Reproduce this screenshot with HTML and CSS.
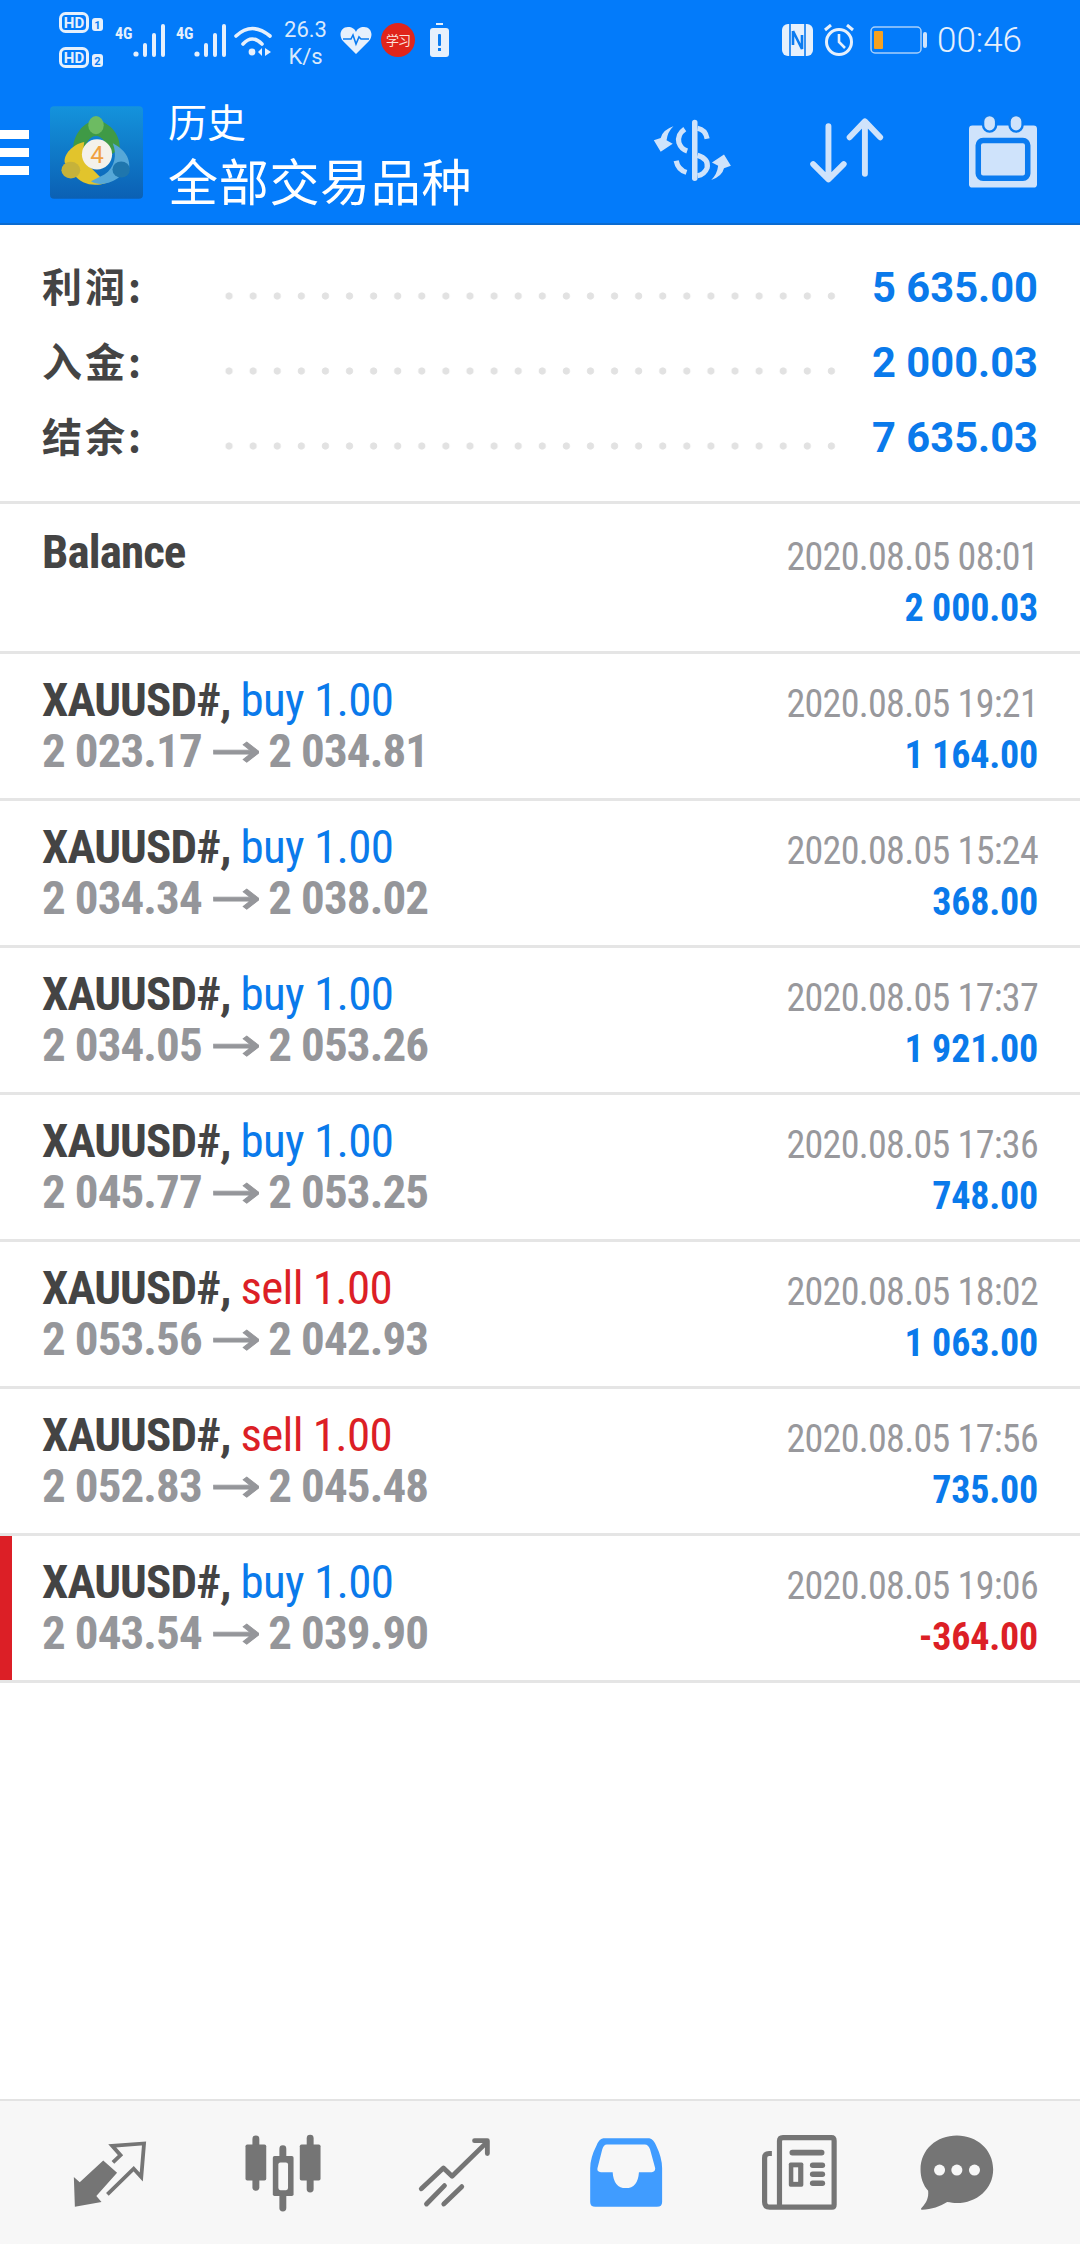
FILE: index.html
```html
<!DOCTYPE html>
<html lang="en">
<head>
  <meta charset="UTF-8">
  <title>History</title>
  <link rel="stylesheet" href="styles.css">
</head>
<body>

  <header class="top">
    <div class="status">
      <svg class="ic-hd" viewBox="0 0 44 56" width="44" height="56">
        <rect x="1.5" y="1.5" width="27" height="18" rx="5" class="hd-box"/>
        <text x="15" y="16" class="hd-text">HD</text>
        <rect x="33" y="6" width="11" height="13" rx="3" fill="#e6f0fc"/>
        <text x="38.5" y="17" class="hd-num">1</text>
        <rect x="1.5" y="36.5" width="27" height="18" rx="5" class="hd-box"/>
        <text x="15" y="51" class="hd-text">HD</text>
        <rect x="33" y="42" width="11" height="13" rx="3" fill="#e6f0fc"/>
        <text x="38.5" y="53" class="hd-num">2</text>
      </svg>
      <svg class="ic-sig" viewBox="0 0 50 34" width="50" height="34">
        <text x="0" y="16" class="g4">4G</text>
        <circle cx="21" cy="31" r="2.6" fill="#e6f0fc"/>
        <rect x="28" y="20" width="4" height="14" rx="2" fill="#e6f0fc"/>
        <rect x="37" y="10" width="4" height="24" rx="2" fill="#e6f0fc"/>
        <rect x="46" y="1" width="4" height="33" rx="2" fill="#e6f0fc"/>
      </svg>
      <svg class="ic-sig2" viewBox="0 0 50 34" width="50" height="34">
        <text x="0" y="16" class="g4">4G</text>
        <circle cx="21" cy="31" r="2.6" fill="#e6f0fc"/>
        <rect x="28" y="20" width="4" height="14" rx="2" fill="#e6f0fc"/>
        <rect x="37" y="10" width="4" height="24" rx="2" fill="#e6f0fc"/>
        <rect x="46" y="1" width="4" height="33" rx="2" fill="#e6f0fc"/>
      </svg>
      <svg class="ic-wifi" viewBox="0 0 38 32" width="38" height="32">
        <path d="M2 12 Q18 -3 36 12" fill="none" stroke="#e6f0fc" stroke-width="3.6" stroke-linecap="round"/>
        <path d="M9 20 Q18 10 28 20" fill="none" stroke="#e6f0fc" stroke-width="3.6" stroke-linecap="round"/>
        <circle cx="18" cy="28" r="3.4" fill="#e6f0fc"/>
        <path d="M28 24 V32 L24 28Z M31 24 V32 L37 28Z" fill="#e6f0fc"/>
      </svg>
      <div class="speed"><span>26.3</span><span>K/s</span></div>
      <svg class="ic-heart" viewBox="0 0 32 28" width="32" height="28">
        <path d="M16 28 L3 15 C-2 9 1 1 8 1 C12 1 15 3 16 6 C17 3 20 1 24 1 C31 1 34 9 29 15Z" fill="#e6f0fc"/>
        <path d="M3 13 H11 L13 9 L16 18 L19 11 L21 13 H29" fill="none" stroke="#0a7bf0" stroke-width="1.6"/>
      </svg>
      <div class="xuexi">学习</div>
      <svg class="ic-batt" viewBox="0 0 19 34" width="19" height="34">
        <rect x="6" y="0" width="7" height="2" fill="#e6f0fc"/>
        <rect x="0" y="5" width="19" height="29" rx="3" fill="#e6f0fc"/>
        <rect x="8" y="11" width="3" height="12" rx="1" fill="#0a7bf0"/>
        <rect x="8" y="25" width="3" height="3" fill="#0a7bf0"/>
      </svg>

      <svg class="ic-nfc" viewBox="0 0 31 32" width="31" height="32">
        <rect width="31" height="32" rx="6" fill="#e6f0fc"/>
        <path d="M8 0 V32 M23 0 V32" stroke="#0a7bf0" stroke-width="1.6"/>
        <path d="M11 7 L20 25 V11 M11 7 V21" fill="none" stroke="#0a7bf0" stroke-width="2.6"/>
      </svg>
      <svg class="ic-alarm" viewBox="0 0 30 32" width="30" height="32">
        <circle cx="15" cy="18" r="12.5" fill="none" stroke="#e6f0fc" stroke-width="3"/>
        <path d="M15 10 V18 L21 24" fill="none" stroke="#e6f0fc" stroke-width="2.6"/>
        <path d="M1 6 L7 1 M29 6 L23 1" stroke="#e6f0fc" stroke-width="3"/>
      </svg>
      <svg class="ic-level" viewBox="0 0 57 28" width="57" height="28">
        <rect x="1" y="1" width="50" height="26" rx="4" fill="none" stroke="#a9d0fa" stroke-width="1.5"/>
        <rect x="4" y="5" width="9" height="18" rx="1" fill="#f7a11f"/>
        <rect x="53" y="6" width="4" height="16" rx="2" fill="#cfe3fb"/>
      </svg>
      <div class="clock">00:46</div>
    </div>

    <div class="bar">
      <div class="burger"><i></i><i></i><i></i></div>
      <svg class="logo" viewBox="28 22 277 275" width="93" height="93">
        <defs>
          <linearGradient id="logoBg" x1="0" y1="0" x2="0" y2="1">
            <stop offset="0" stop-color="#1493dc"/>
            <stop offset="1" stop-color="#0b60b4"/>
          </linearGradient>
        </defs>
        <rect x="28" y="22" width="277" height="275" rx="12" fill="url(#logoBg)"/>
        <path d="M165 62 C118 72 92 120 98 160 L130 170 C130 130 148 110 165 110 C182 110 200 130 202 170 L236 150 C238 110 212 72 165 62Z" fill="#3f9a46"/>
        <ellipse cx="165" cy="78" rx="23" ry="27" fill="#6dbb62"/>
        <path d="M130 128 C95 135 68 165 72 190 L100 225 C120 255 160 262 195 250 L150 205 C125 190 125 160 130 128Z" fill="#e2c42c"/>
        <ellipse cx="90" cy="212" rx="28" ry="25" fill="#c6b23a"/>
        <path d="M215 132 C250 150 272 180 262 215 L235 232 C215 250 175 262 150 245 L190 225 C222 205 228 165 215 132Z" fill="#56a8d8"/>
        <ellipse cx="240" cy="210" rx="26" ry="24" fill="#1f76ad"/>
        <circle cx="168" cy="165" r="45" fill="#f4f1ea"/>
        <text x="168" y="191" class="logo-four">4</text>
      </svg>
      <div class="titles">
        <div class="sub">历史</div>
        <div class="main-title">全部交易品种</div>
      </div>
      <svg class="act-dollar" viewBox="320 360 232 186" width="80" height="64">
        <rect x="436" y="365" width="16" height="178" rx="8" fill="#cfe3fb"/>
        <g fill="none" stroke="#cfe3fb" stroke-width="15">
          <path d="M415 392 Q392 408 398 432 Q404 450 422 456"/>
          <path d="M452 390 Q475 394 480 420"/>
          <path d="M390 484 Q395 510 420 518"/>
          <path d="M452 468 Q485 478 480 505 Q472 525 452 528"/>
        </g>
        <path d="M382 384 Q350 395 345 418 L325 425 L345 458 L380 435 L362 425 Q365 400 382 384Z" fill="#cfe3fb"/>
        <path d="M492 540 Q524 529 529 506 L549 499 L529 466 L494 489 L512 499 Q509 524 492 540Z" fill="#cfe3fb"/>
      </svg>
      <svg class="act-sort" viewBox="780 362 216 192" width="75" height="67">
        <g fill="none" stroke="#cfe3fb" stroke-width="17" stroke-linecap="round" stroke-linejoin="round">
          <path d="M836 388 V540 M792 497 L836 541 L880 497"/>
          <path d="M941 376 V525 M897 420 L941 374 L985 420"/>
        </g>
      </svg>
      <svg class="act-cal" viewBox="1243 350 198 212" width="68" height="73">
        <rect x="1243" y="380" width="198" height="181" rx="10" fill="#cfe3fb"/>
        <rect x="1284" y="350" width="38" height="48" rx="19" fill="#cfe3fb" stroke="#0a7bf0" stroke-width="7"/>
        <rect x="1361" y="350" width="38" height="48" rx="19" fill="#cfe3fb" stroke="#0a7bf0" stroke-width="7"/>
        <rect x="1270" y="424" width="144" height="110" rx="14" fill="#cfe3fb" stroke="#0a7bf0" stroke-width="16"/>
      </svg>
    </div>
  </header>

  <section class="summary">
    <div class="sum-row"><span class="sum-label">利润:</span><span class="dots"></span><span class="sum-val">5 635.00</span></div>
    <div class="sum-row"><span class="sum-label">入金:</span><span class="dots"></span><span class="sum-val">2 000.03</span></div>
    <div class="sum-row"><span class="sum-label">结余:</span><span class="dots"></span><span class="sum-val">7 635.03</span></div>
  </section>

  <main class="list">
    <div class="row first">
      <div class="left"><div class="l1"><b>Balance</b></div></div>
      <div class="right"><div class="date">2020.08.05 08:01</div><div class="val">2 000.03</div></div>
    </div>
    <div class="row">
      <div class="left"><div class="l1"><b>XAUUSD#,</b> <span class="buy">buy 1.00</span></div><div class="l2">2 023.17<span class="arr">→</span>2 034.81</div></div>
      <div class="right"><div class="date">2020.08.05 19:21</div><div class="val">1 164.00</div></div>
    </div>
    <div class="row">
      <div class="left"><div class="l1"><b>XAUUSD#,</b> <span class="buy">buy 1.00</span></div><div class="l2">2 034.34<span class="arr">→</span>2 038.02</div></div>
      <div class="right"><div class="date">2020.08.05 15:24</div><div class="val">368.00</div></div>
    </div>
    <div class="row">
      <div class="left"><div class="l1"><b>XAUUSD#,</b> <span class="buy">buy 1.00</span></div><div class="l2">2 034.05<span class="arr">→</span>2 053.26</div></div>
      <div class="right"><div class="date">2020.08.05 17:37</div><div class="val">1 921.00</div></div>
    </div>
    <div class="row">
      <div class="left"><div class="l1"><b>XAUUSD#,</b> <span class="buy">buy 1.00</span></div><div class="l2">2 045.77<span class="arr">→</span>2 053.25</div></div>
      <div class="right"><div class="date">2020.08.05 17:36</div><div class="val">748.00</div></div>
    </div>
    <div class="row">
      <div class="left"><div class="l1"><b>XAUUSD#,</b> <span class="sell">sell 1.00</span></div><div class="l2">2 053.56<span class="arr">→</span>2 042.93</div></div>
      <div class="right"><div class="date">2020.08.05 18:02</div><div class="val">1 063.00</div></div>
    </div>
    <div class="row">
      <div class="left"><div class="l1"><b>XAUUSD#,</b> <span class="sell">sell 1.00</span></div><div class="l2">2 052.83<span class="arr">→</span>2 045.48</div></div>
      <div class="right"><div class="date">2020.08.05 17:56</div><div class="val">735.00</div></div>
    </div>
    <div class="row loss">
      <div class="left"><div class="l1"><b>XAUUSD#,</b> <span class="buy">buy 1.00</span></div><div class="l2">2 043.54<span class="arr">→</span>2 039.90</div></div>
      <div class="right"><div class="date">2020.08.05 19:06</div><div class="val neg">-364.00</div></div>
    </div>
  </main>

  <nav class="tabs">
    <svg class="tab" viewBox="201 147 240 240">
      <path d="M215 280 L232 295 L300 232 L340 268 L280 335 L295 352 L218 366Z" fill="#757575"/>
      <path d="M328 238 L350 217 L326 190 L418 183 L410 280 L388 256 L312 330" fill="none" stroke="#757575" stroke-width="11"/>
    </svg>
    <svg class="tab" viewBox="696 147 240 240">
      <g fill="#757575">
        <rect x="729" y="160" width="20" height="160" rx="10"/>
        <rect x="709" y="186" width="60" height="104" rx="5"/>
        <rect x="807" y="188" width="20" height="192" rx="10"/>
        <rect x="788" y="219" width="60" height="116" rx="5"/>
        <rect x="886" y="158" width="20" height="167" rx="10"/>
        <rect x="866" y="186" width="60" height="104" rx="5"/>
      </g>
      <rect x="804" y="238" width="28" height="80" rx="6" fill="#f7f7f7"/>
    </svg>
    <svg class="tab" viewBox="1197 147 240 240">
      <g fill="none" stroke="#757575" stroke-width="14" stroke-linecap="round" stroke-linejoin="round">
        <path d="M1221 314 L1285 254 L1310 278 L1405 185"/>
        <path d="M1375 175 H1412 V212"/>
        <path d="M1236 358 L1288 305 M1286 358 L1338 308"/>
      </g>
    </svg>
    <svg class="tab" viewBox="132 147 240 240">
      <path d="M185 168 H318 Q330 170 338 190 Q355 225 355 255 V352 Q355 366 340 366 H162 Q147 366 147 352 V255 Q147 225 165 190 Q172 170 185 168Z" fill="#409cff"/>
      <path d="M195 186 H305 Q315 186 320 200 L335 255 Q335 266 325 266 H288 Q285 312 250 312 Q215 312 212 266 H178 Q166 266 168 255 L182 200 Q186 186 195 186Z" fill="#f7f7f7"/>
    </svg>
    <svg class="tab" viewBox="633 147 240 240">
      <path d="M676 212 H668 Q655 212 655 225 V352 Q655 367 670 367 H850 Q856 367 856 360 V175 Q856 166 848 166 H708 Q698 166 698 176 V367" fill="none" stroke="#757575" stroke-width="15"/>
      <g fill="#757575">
        <rect x="727" y="201" width="101" height="17" rx="8"/>
        <rect x="725" y="238" width="42" height="70" rx="5"/>
        <rect x="786" y="238" width="44" height="16" rx="8"/>
        <rect x="786" y="264" width="44" height="16" rx="8"/>
        <rect x="786" y="290" width="44" height="16" rx="8"/>
      </g>
      <rect x="738" y="252" width="14" height="42" fill="#f7f7f7"/>
    </svg>
    <svg class="tab tab-chat" viewBox="1092 147 240 240">
      <path d="M1213 160 C1270 160 1318 200 1318 258 C1318 315 1270 355 1213 355 C1205 355 1195 353 1185 352 C1165 365 1140 373 1112 375 C1108 374 1109 371 1112 368 C1125 355 1132 340 1130 320 C1115 302 1108 282 1108 258 C1108 200 1155 160 1213 160Z" fill="#757575"/>
      <g fill="#f7f7f7">
        <circle cx="1163" cy="260" r="16"/>
        <circle cx="1213" cy="260" r="16"/>
        <circle cx="1264" cy="260" r="16"/>
      </g>
    </svg>
  </nav>

</body>
</html>
```

FILE: styles.css
```css
html, body { margin: 0; padding: 0; }
body { width: 1080px; height: 2244px; overflow: hidden; display: flex; flex-direction: column; background: #fff; font-family: Roboto, "Noto Sans CJK SC", sans-serif; }

.top { background: #037bfa; border-bottom: 2px solid #0b6bd0; height: 223px; color: #fff; }
.status { display: flex; align-items: center; height: 80px; padding-left: 59px; padding-right: 58px; box-sizing: border-box; }
.ic-sig { margin-left: 12px; }
.ic-sig2 { margin-left: 11px; }
.ic-wifi { margin-left: 8px; }
.speed { margin-left: 12px; margin-top: 6px; width: 43px; display: flex; flex-direction: column; align-items: center; font-size: 22px; line-height: 27px; color: #d9e9fc; }
.ic-heart { margin-left: 13px; }
.xuexi { margin-left: 9px; width: 34px; height: 34px; border-radius: 50%; background: #e0251b; color: #fbe3dc; font-size: 13px; line-height: 34px; text-align: center; font-family: "Noto Sans CJK SC", sans-serif; letter-spacing: -1px; }
.ic-batt { margin-left: 15px; }
.ic-nfc { margin-left: auto; }
.ic-alarm { margin-left: 11px; }
.ic-level { margin-left: 16px; }
.clock { margin-left: 10px; font-size: 35px; font-weight: 300; color: #e6f0fc; }
.hd-box { fill: none; stroke: #e6f0fc; stroke-width: 3; }
.hd-text { font: bold 15px Roboto, sans-serif; fill: #e6f0fc; text-anchor: middle; }
.hd-num { font: bold 11px Roboto, sans-serif; fill: #0a7bf0; text-anchor: middle; }
.g4 { font: bold 16px Roboto, sans-serif; font-stretch: condensed; fill: #e6f0fc; }
.logo-four { font: 72px Roboto, sans-serif; fill: #f0a040; text-anchor: middle; }

.bar { display: flex; align-items: center; height: 143px; }
.burger { display: flex; flex-direction: column; gap: 9px; width: 29px; margin-top: 2px; }
.burger i { display: block; height: 9px; background: #fff; }
.logo { margin-left: 21px; margin-top: 2px; }
.titles { margin-left: 25px; font-family: "Noto Sans CJK SC", sans-serif; margin-top: 5px; }
.sub { font-size: 39px; line-height: 50px; }
.main-title { font-size: 50px; line-height: 68px; letter-spacing: 0.7px; }
.act-dollar { margin-left: auto; margin-top: -4px; }
.act-sort { margin-left: 77px; margin-top: -2px; }
.act-cal { margin-left: 85px; margin-right: 43px; margin-top: -1px; }

.summary { padding: 25px 42px 25.5px 42px; border-bottom: 3px solid #e5e5e5; }
.sum-row { display: flex; align-items: center; height: 75px; }
.sum-label { width: 176px; margin-bottom: 5px; font-family: "Noto Sans CJK SC", sans-serif; font-size: 40px; font-weight: 700; color: #444; letter-spacing: 3px; }
.dots { flex: 1; height: 8px; margin-top: 16px; background: radial-gradient(circle, #e2e2e2 3.2px, transparent 4px) -1px 0 / 24.1px 8px repeat-x; }
.sum-val { width: 200px; text-align: right; font-size: 41.7px; font-weight: 700; color: #0a7aeb; }

.list { flex: 1; }
.row { display: flex; justify-content: space-between; height: 144px; border-bottom: 3px solid #e5e5e5; padding: 0 42px; font-family: "Roboto Condensed", Roboto, sans-serif; font-stretch: condensed; }
.row.first { padding-top: 3px; }
.row.first .left { padding-top: 19px; }
.row.loss { box-shadow: inset 12px 0 0 #dc1f26; }
.left { padding-top: 20px; }
.l1 { font-size: 47px; line-height: 51px; letter-spacing: -0.9px; color: #0a7aeb; }
.l1 b { color: #444; }
.l2 { font-size: 47px; line-height: 51px; letter-spacing: -0.9px; font-weight: 700; color: #95969a; }
.arr { display: inline-block; font-family: "DejaVu Sans", sans-serif; font-size: 47px; line-height: 40px; font-weight: 400; font-stretch: normal; margin: 0 14px; transform: scaleX(1.3); -webkit-text-stroke: 0.8px #95969a; }
.buy { color: #0a7aeb; letter-spacing: -0.7px; }
.sell { color: #dc1f26; letter-spacing: -0.7px; }
.right { padding-top: 22px; text-align: right; }
.date { font-size: 38px; line-height: 51px; padding-top: 3px; letter-spacing: -0.7px; color: #98989c; }
.val { font-size: 38px; line-height: 51px; letter-spacing: -0.2px; font-weight: 700; color: #0a7aeb; }
.val.neg { color: #dc1f26; }

.tabs { display: flex; flex: none; height: 145px; box-sizing: border-box; padding: 30px 0 0 69px; background: #f7f7f7; border-top: 2px solid #e3e3e3; }
.tab { width: 83px; height: 83px; margin-left: 89px; }
.tab:first-child { margin-left: 0; }
.tab-chat { margin-left: 75px; }
```
